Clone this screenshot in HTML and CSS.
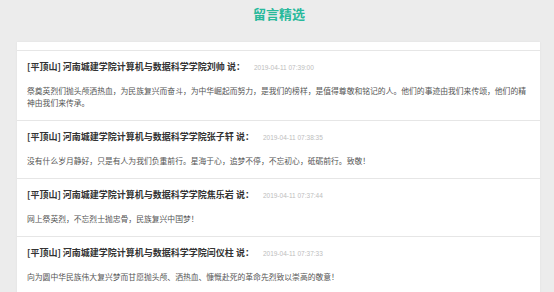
FILE: index.html
```html
<!DOCTYPE html>
<html lang="zh-CN">
<head>
  <meta charset="UTF-8" />
  <meta name="viewport" content="width=device-width, initial-scale=1.0"/>
  <title>留言精选</title>
  <link rel="stylesheet" href="styles.css">
</head>
<body>
  <h1 class="page-title">留言精选</h1>
  <div class="message-panel">
    <div class="panel-top"></div>

    <div class="message">
      <div class="message-head">
        <span class="author">[平顶山] 河南城建学院计算机与数据科学学院刘帅 说：</span>
        <span class="time">2019-04-11 07:39:00</span>
      </div>
      <p class="message-text">祭奠英烈们抛头颅洒热血，为民族复兴而奋斗，为中华崛起而努力，是我们的榜样，是值得尊敬和铭记的人。他们的事迹由我们来传颂，他们的精神由我们来传承。</p>
    </div>

    <div class="message">
      <div class="message-head">
        <span class="author">[平顶山] 河南城建学院计算机与数据科学学院张子轩 说：</span>
        <span class="time">2019-04-11 07:38:35</span>
      </div>
      <p class="message-text">没有什么岁月静好，只是有人为我们负重前行。星海于心，追梦不停，不忘初心，砥砺前行。致敬！</p>
    </div>

    <div class="message">
      <div class="message-head">
        <span class="author">[平顶山] 河南城建学院计算机与数据科学学院焦乐岩 说：</span>
        <span class="time">2019-04-11 07:37:44</span>
      </div>
      <p class="message-text">网上祭英烈，不忘烈士抛忠骨，民族复兴中国梦！</p>
    </div>

    <div class="message">
      <div class="message-head">
        <span class="author">[平顶山] 河南城建学院计算机与数据科学学院闫仪柱 说：</span>
        <span class="time">2019-04-11 07:37:33</span>
      </div>
      <p class="message-text">向为圆中华民族伟大复兴梦而甘愿抛头颅、洒热血、慷慨赴死的革命先烈致以崇高的敬意！</p>
    </div>
  </div>
</body>
</html>
```

FILE: styles.css
```css
* {
  margin: 0;
  padding: 0;
  box-sizing: border-box;
  font-family: "Noto Sans CJK SC", "Noto Sans", sans-serif;
}

body {
  background-color: #ececec;
  overflow: hidden;
}

.page-title {
  height: 42px;
  padding-top: 6px;
  padding-left: 4px;
  text-align: center;
  font-size: 13px;
  line-height: 16px;
  font-weight: bold;
  color: #27b99b; /* teal heading */
}

.message-panel {
  margin-left: 17px;
  width: 523px;
  background-color: #fff;
  box-shadow: 0 0 2px rgba(0, 0, 0, 0.06);
}

.panel-top {
  height: 9px;
  border-bottom: 1px solid #e6e6e6;
}

.message {
  padding: 9px 10px 11px;
  border-bottom: 1px solid #e6e6e6;
}

.message-head {
  display: flex;
  align-items: baseline;
  height: 14px;
  margin-bottom: 11px;
}

.author {
  font-size: 9px;
  line-height: 14px;
  font-weight: bold;
  color: #333;
}

.time {
  margin-left: 9px;
  font-size: 6.5px;
  color: #bdbdbd;
  font-family: "Liberation Sans", sans-serif;
}

.message-text {
  font-size: 7.8px;
  line-height: 12px;
  color: #555;
}
```
